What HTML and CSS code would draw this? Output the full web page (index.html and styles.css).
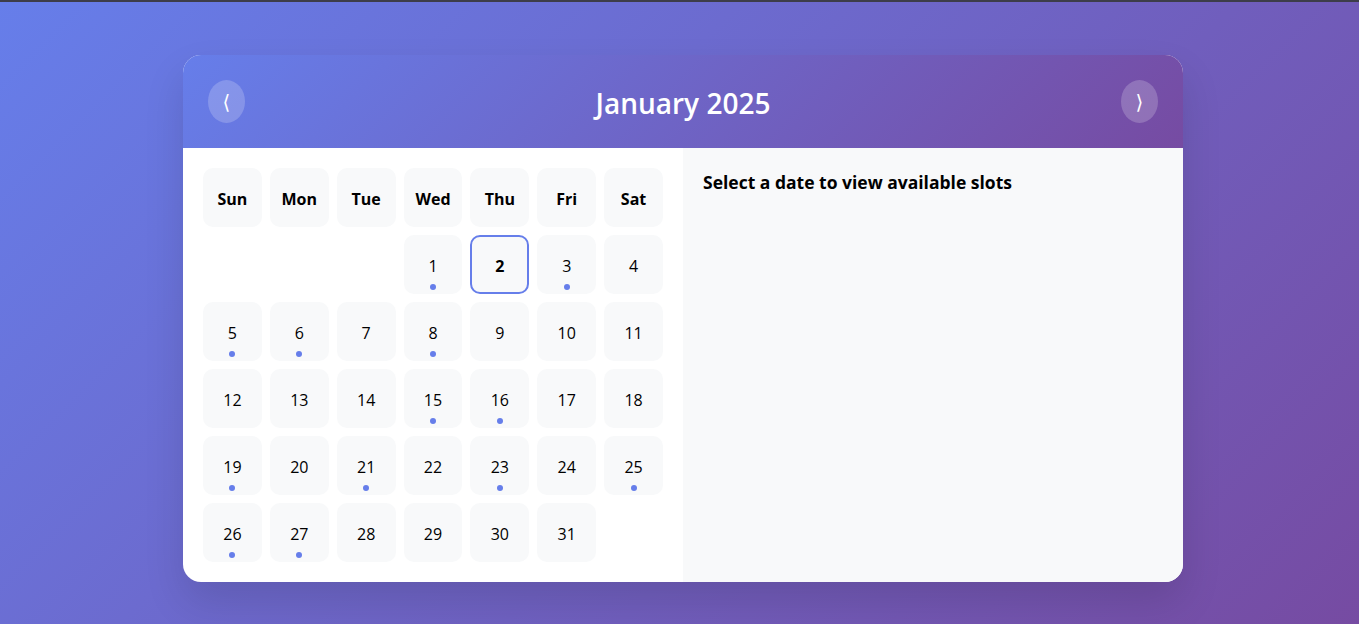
FILE: index.html
```html
<!DOCTYPE html>
<html lang="en">
<head>
<meta charset="utf-8">
<title>Calendar</title>
<link rel="stylesheet" href="styles.css">
</head>
<body>
<div class="card">
  <header class="cal-header">
    <button class="nav-btn">&#10216;</button>
    <h1 class="title">January 2025</h1>
    <button class="nav-btn">&#10217;</button>
  </header>
  <div class="cal-body">
    <section class="cal-left">
      <div class="grid">
        <div class="cell head">Sun</div>
        <div class="cell head">Mon</div>
        <div class="cell head">Tue</div>
        <div class="cell head">Wed</div>
        <div class="cell head">Thu</div>
        <div class="cell head">Fri</div>
        <div class="cell head">Sat</div>

        <div class="cell empty"></div>
        <div class="cell empty"></div>
        <div class="cell empty"></div>
        <div class="cell day dot">1</div>
        <div class="cell day today">2</div>
        <div class="cell day dot">3</div>
        <div class="cell day">4</div>

        <div class="cell day dot">5</div>
        <div class="cell day dot">6</div>
        <div class="cell day">7</div>
        <div class="cell day dot">8</div>
        <div class="cell day">9</div>
        <div class="cell day">10</div>
        <div class="cell day">11</div>

        <div class="cell day">12</div>
        <div class="cell day">13</div>
        <div class="cell day">14</div>
        <div class="cell day dot">15</div>
        <div class="cell day dot">16</div>
        <div class="cell day">17</div>
        <div class="cell day">18</div>

        <div class="cell day dot">19</div>
        <div class="cell day">20</div>
        <div class="cell day dot">21</div>
        <div class="cell day">22</div>
        <div class="cell day dot">23</div>
        <div class="cell day">24</div>
        <div class="cell day dot">25</div>

        <div class="cell day dot">26</div>
        <div class="cell day dot">27</div>
        <div class="cell day">28</div>
        <div class="cell day">29</div>
        <div class="cell day">30</div>
        <div class="cell day">31</div>
      </div>
    </section>
    <section class="cal-right">
      <h2 class="slots-title">Select a date to view available slots</h2>
    </section>
  </div>
</div>
</body>
</html>
```
FILE: styles.css
```css
* { box-sizing: border-box; }
html, body { margin: 0; padding: 0; }
body {
  min-height: 100vh;
  border-top: 2px solid #3d3d4a;
  background: linear-gradient(135deg, #667eea 0%, #764ba2 100%);
  font-family: "Open Sans", "Noto Sans", sans-serif;
  display: flex;
  justify-content: center;
  align-items: flex-start;
  padding-top: 53px;
  padding-left: 7px;
}
.card {
  width: 1000px;
  background: #fff;
  border-radius: 18px;
  overflow: hidden;
  box-shadow: 0 20px 40px rgba(0, 0, 0, 0.12);
}
.cal-header {
  background: linear-gradient(135deg, #667eea 0%, #764ba2 100%);
  color: #fff;
  padding: 25px;
  display: flex;
  align-items: center;
  justify-content: space-between;
}
.nav-btn {
  width: 37px;
  height: 43px;
  border: none;
  border-radius: 50%;
  background: rgba(255, 255, 255, 0.2);
  color: #fff;
  font-size: 20px;
  font-family: "DejaVu Sans", sans-serif;
  padding: 0;
  display: flex;
  align-items: center;
  justify-content: center;
  cursor: pointer;
}
.title {
  margin: 0;
  font-size: 28px;
  font-weight: 600;
  position: relative;
  top: 1px;
}
.cal-body {
  display: flex;
}
.cal-left {
  width: 500px;
  padding: 20px;
}
.grid {
  display: grid;
  grid-template-columns: repeat(7, 1fr);
  gap: 8px;
}
.cell {
  height: 59px;
  border-radius: 10px;
  display: flex;
  align-items: center;
  justify-content: center;
  position: relative;
  font-size: 16px;
  color: #000;
}
.head {
  background: #f8f9fa;
  font-weight: 700;
  font-size: 16px;
  padding-top: 2px;
}
.day {
  background: #f8f9fa;
  padding-top: 2px;
}
.empty { background: transparent; }
.today {
  border: 2px solid #667eea;
  font-weight: 700;
  font-size: 16px;
}
.dot::after {
  content: "";
  position: absolute;
  width: 6px;
  height: 6px;
  border-radius: 50%;
  background: #667eea;
  left: 50%;
  bottom: 4px;
  transform: translateX(-50%);
}
.cal-right {
  flex: 1;
  background: #f8f9fa;
  padding: 22px 20px 20px;
}
.slots-title {
  margin: 0;
  font-size: 17.5px;
  font-weight: 700;
  color: #000;
}
```
